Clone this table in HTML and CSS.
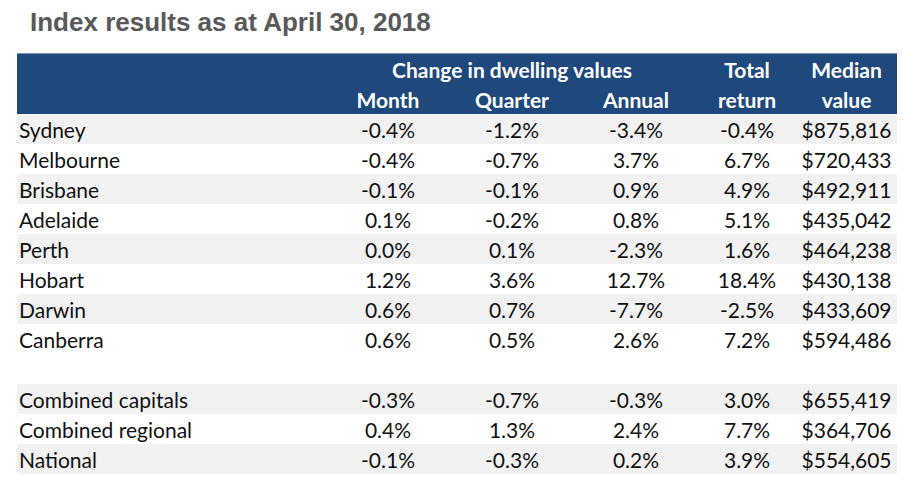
FILE: index.html
```html
<!DOCTYPE html>
<html>
<head>
<meta charset="utf-8">
<link rel="stylesheet" href="styles.css">
</head>
<body>
<h1 class="title">Index results as at April 30, 2018</h1>
<table class="idx">
  <colgroup>
    <col class="c-label"><col class="c-num"><col class="c-num"><col class="c-num"><col class="c-total"><col class="c-median">
  </colgroup>
  <thead>
    <tr>
      <th></th>
      <th colspan="3">Change in dwelling values</th>
      <th>Total</th>
      <th>Median</th>
    </tr>
    <tr>
      <th></th>
      <th>Month</th>
      <th>Quarter</th>
      <th>Annual</th>
      <th>return</th>
      <th>value</th>
    </tr>
  </thead>
  <tbody>
    <tr class="g"><td>Sydney</td><td>-0.4%</td><td>-1.2%</td><td>-3.4%</td><td>-0.4%</td><td>$875,816</td></tr>
    <tr><td>Melbourne</td><td>-0.4%</td><td>-0.7%</td><td>3.7%</td><td>6.7%</td><td>$720,433</td></tr>
    <tr class="g"><td>Brisbane</td><td>-0.1%</td><td>-0.1%</td><td>0.9%</td><td>4.9%</td><td>$492,911</td></tr>
    <tr><td>Adelaide</td><td>0.1%</td><td>-0.2%</td><td>0.8%</td><td>5.1%</td><td>$435,042</td></tr>
    <tr class="g"><td>Perth</td><td>0.0%</td><td>0.1%</td><td>-2.3%</td><td>1.6%</td><td>$464,238</td></tr>
    <tr><td>Hobart</td><td>1.2%</td><td>3.6%</td><td>12.7%</td><td>18.4%</td><td>$430,138</td></tr>
    <tr class="g"><td>Darwin</td><td>0.6%</td><td>0.7%</td><td>-7.7%</td><td>-2.5%</td><td>$433,609</td></tr>
    <tr><td>Canberra</td><td>0.6%</td><td>0.5%</td><td>2.6%</td><td>7.2%</td><td>$594,486</td></tr>
    <tr class="blank"><td colspan="6"></td></tr>
    <tr class="g"><td>Combined capitals</td><td>-0.3%</td><td>-0.7%</td><td>-0.3%</td><td>3.0%</td><td>$655,419</td></tr>
    <tr><td>Combined regional</td><td>0.4%</td><td>1.3%</td><td>2.4%</td><td>7.7%</td><td>$364,706</td></tr>
    <tr class="g"><td>National</td><td>-0.1%</td><td>-0.3%</td><td>0.2%</td><td>3.9%</td><td>$554,605</td></tr>
  </tbody>
</table>
</body>
</html>
```
FILE: styles.css
```css
html, body {
  margin: 0;
  padding: 0;
  background: #ffffff;
}
.title {
  margin: 0;
  padding: 7px 0 0 30px;
  height: 45px;
  box-sizing: border-box;
  font-family: "Liberation Sans", Arial, sans-serif;
  font-weight: bold;
  font-size: 26px;
  line-height: 30px;
  color: #595959;
}
.idx {
  margin-left: 17px;
  margin-top: 8px;
  width: 880px;
  border-collapse: collapse;
  table-layout: fixed;
  font-family: Lato, "Open Sans", sans-serif;
  font-size: 21px;
  color: #111111;
}
.c-label { width: 309px; }
.c-num { width: 124px; }
.c-total { width: 98px; }
.c-median { width: 101px; }
.idx thead th {
  background: #1f497d;
  color: #ffffff;
  font-weight: bold;
  height: 30px;
  padding: 0;
  text-align: center;
  vertical-align: middle;
  white-space: nowrap;
}
.idx thead tr:first-child th {
  border-top: 1px solid #7f95b3;
}
.idx td {
  height: 30px;
  padding: 0;
  text-align: center;
  vertical-align: middle;
  white-space: nowrap;
}
.idx td:first-child {
  text-align: left;
  padding-left: 2px;
}
.idx tr.g td {
  background: #f2f2f2;
}
```
